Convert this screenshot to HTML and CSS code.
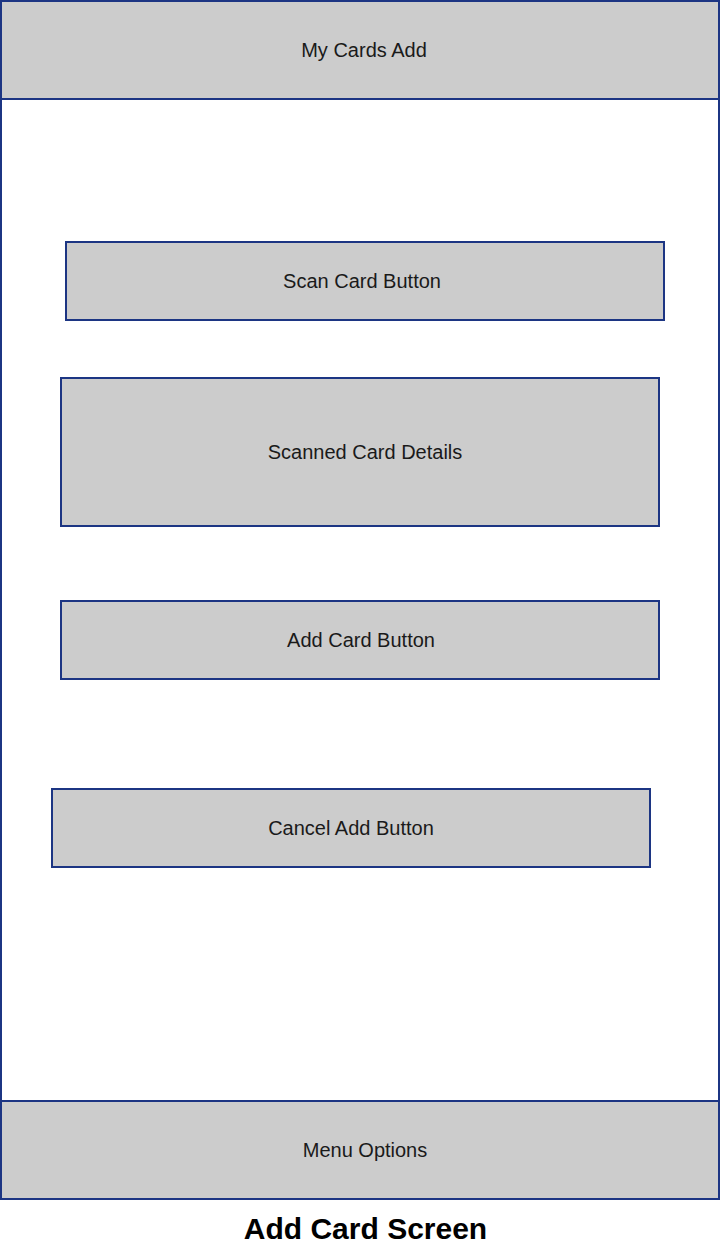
FILE: index.html
```html
<!DOCTYPE html>
<html>
<head>
<meta charset="utf-8">
<link rel="stylesheet" href="styles.css">
</head>
<body>
<div class="frame">
  <div class="header">My Cards Add</div>
  <div class="main">
    <div class="box btn scan">Scan Card Button</div>
    <div class="box details">Scanned Card Details</div>
    <div class="box btn add">Add Card Button</div>
    <div class="box btn cancel">Cancel Add Button</div>
  </div>
  <div class="footer">Menu Options</div>
</div>
<div class="title">Add Card Screen</div>
</body>
</html>
```
FILE: styles.css
```css
html, body {
  margin: 0;
  padding: 0;
  background: #ffffff;
}
body {
  font-family: "Liberation Sans", Arial, sans-serif;
  color: #1a1a1a;
  width: 720px;
}
.frame {
  box-sizing: border-box;
  width: 720px;
  height: 1200px;
  border: 2px solid #1c3583;
  display: flex;
  flex-direction: column;
}
.header, .footer {
  background: #cccccc;
  display: flex;
  align-items: center;
  justify-content: center;
  font-size: 20px;
}
.header {
  height: 98px;
  box-sizing: border-box;
  border-bottom: 2px solid #1c3583;
  padding-top: 1px;
  padding-left: 8px;
}
.footer {
  height: 98px;
  box-sizing: border-box;
  border-top: 2px solid #1c3583;
  padding-left: 10px;
}
.main {
  height: 1000px;
  box-sizing: border-box;
  display: flex;
  flex-direction: column;
  align-items: flex-start;
}
.box {
  box-sizing: border-box;
  width: 600px;
  border: 2px solid #1c3583;
  background: #cccccc;
  display: flex;
  align-items: center;
  justify-content: center;
  font-size: 20px;
}
.btn { height: 80px; }
.scan { margin: 141px 0 0 63px; padding-right: 6px; }
.details { height: 150px; margin: 56px 0 0 58px; padding-left: 10px; }
.add { margin: 73px 0 0 58px; padding-left: 2px; }
.cancel { margin: 108px 0 0 49px; }
.title {
  text-align: center;
  font-weight: bold;
  font-size: 30px;
  line-height: 45px;
  padding-top: 6px;
  color: #000000;
  padding-left: 11px;
}
```
